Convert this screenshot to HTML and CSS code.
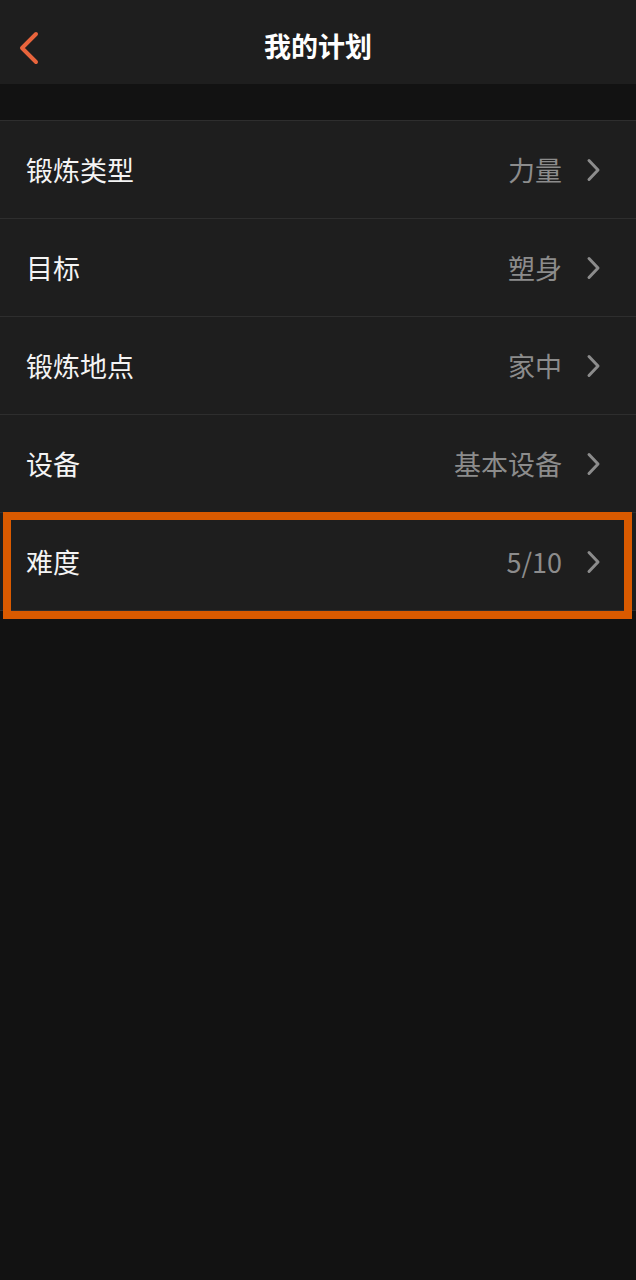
FILE: index.html
```html
<!DOCTYPE html>
<html lang="zh-CN">
<head>
    <title>我的计划</title>
    <meta charset="utf-8"/>
    <link rel="stylesheet" href="styles.css">
</head>
<body>

<div class="navbar">
    <div class="nav-back">
        <svg width="22" height="34" viewBox="0 0 22 34">
            <path d="M18 3 L4 17 L18 31" fill="none" stroke="#e8643c" stroke-width="4" stroke-linecap="round" stroke-linejoin="round"/>
        </svg>
    </div>
    <h1 class="nav-title">我的计划</h1>
</div>

<div class="spacer"></div>

<div class="list">
    <div class="row">
        <span class="label">锻炼类型</span>
        <span class="value">力量</span>
        <svg class="chev" width="16" height="24" viewBox="0 0 16 24"><path d="M3 2.5 L12 12 L3 21.5" fill="none" stroke="#8c8c8c" stroke-width="3" stroke-linecap="round" stroke-linejoin="round"/></svg>
    </div>
    <div class="row">
        <span class="label">目标</span>
        <span class="value">塑身</span>
        <svg class="chev" width="16" height="24" viewBox="0 0 16 24"><path d="M3 2.5 L12 12 L3 21.5" fill="none" stroke="#8c8c8c" stroke-width="3" stroke-linecap="round" stroke-linejoin="round"/></svg>
    </div>
    <div class="row">
        <span class="label">锻炼地点</span>
        <span class="value">家中</span>
        <svg class="chev" width="16" height="24" viewBox="0 0 16 24"><path d="M3 2.5 L12 12 L3 21.5" fill="none" stroke="#8c8c8c" stroke-width="3" stroke-linecap="round" stroke-linejoin="round"/></svg>
    </div>
    <div class="row">
        <span class="label">设备</span>
        <span class="value">基本设备</span>
        <svg class="chev" width="16" height="24" viewBox="0 0 16 24"><path d="M3 2.5 L12 12 L3 21.5" fill="none" stroke="#8c8c8c" stroke-width="3" stroke-linecap="round" stroke-linejoin="round"/></svg>
    </div>
    <div class="row highlighted">
        <span class="label">难度</span>
        <span class="value">5/10</span>
        <svg class="chev" width="16" height="24" viewBox="0 0 16 24"><path d="M3 2.5 L12 12 L3 21.5" fill="none" stroke="#8c8c8c" stroke-width="3" stroke-linecap="round" stroke-linejoin="round"/></svg>
        <div class="mark"></div>
    </div>
</div>

</body>
</html>
```

FILE: styles.css
```css
body {
    margin: 0;
    height: 100vh;
    background: #121212;
    font-family: "Noto Sans CJK SC", "Noto Sans", sans-serif;
    color: #ffffff;
}

.navbar {
    height: 84px;
    background: #1e1e1e;
    display: flex;
    align-items: center;
    justify-content: center;
    position: relative;
}

.nav-back {
    position: absolute;
    left: 18px;
    top: 31px;
    line-height: 0;
}

.nav-title {
    margin: 6px 0 0 0;
    font-size: 27px;
    font-weight: bold;
}

.spacer {
    height: 36px;
}

.list {
    border-top: 1px solid #2e2e2e;
}

.row {
    position: relative;
    height: 97px;
    background: #1e1e1e;
    border-bottom: 1px solid #2e2e2e;
    display: flex;
    align-items: center;
    padding: 0 34px 0 26px;
    font-size: 27px;
}

.label {
    flex: 1;
    color: #f4f4f4;
}

.value {
    color: #8c8c8c;
    margin-right: 24px;
}

.chev {
    display: block;
}

/* 高亮标注框 */
.mark {
    position: absolute;
    left: 3px;
    right: 4px;
    top: -1px;
    height: 91px;
    border: 8px solid #d95a00;
}
```
